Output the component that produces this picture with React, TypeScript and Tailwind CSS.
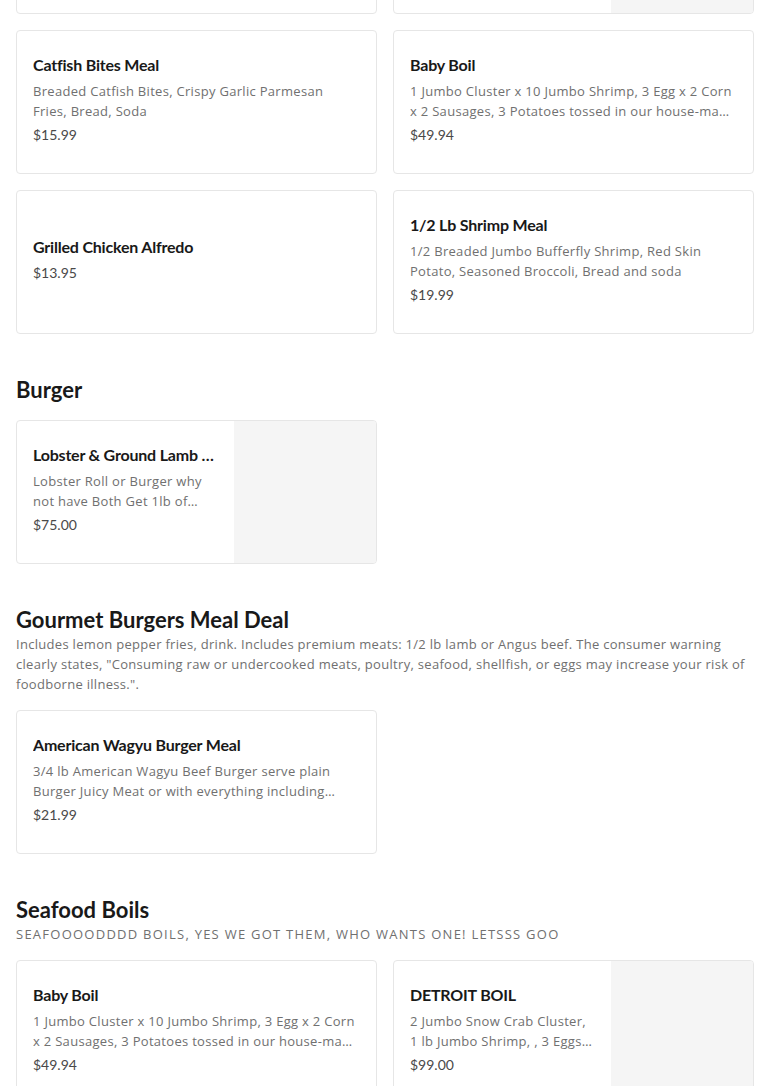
type Item = {
  name: string;
  desc?: string;
  price: string;
  image?: boolean;
};

type Section = {
  title?: string;
  desc?: string;
  items: Item[];
};

const sections: Section[] = [
  {
    items: [
      {
        name: "Fried Catfish Meal",
        desc: "Two Catfish Fillets, Fries, Bread, Soda",
        price: "$17.99",
      },
      {
        name: "Snow Crab Meal",
        desc: "1 Snow Crab Cluster, Corn, Potatoes, Egg",
        price: "$29.99",
        image: true,
      },
      {
        name: "Catfish Bites Meal",
        desc: "Breaded Catfish Bites, Crispy Garlic Parmesan Fries, Bread, Soda",
        price: "$15.99",
      },
      {
        name: "Baby Boil",
        desc: "1 Jumbo Cluster x 10 Jumbo Shrimp, 3 Egg x 2 Corn x 2 Sausages, 3 Potatoes tossed in our house-made seafood sauce",
        price: "$49.94",
      },
      { name: "Grilled Chicken Alfredo", price: "$13.95" },
      {
        name: "1/2 Lb Shrimp Meal",
        desc: "1/2 Breaded Jumbo Bufferfly Shrimp, Red Skin Potato, Seasoned Broccoli, Bread and soda",
        price: "$19.99",
      },
    ],
  },
  {
    title: "Burger",
    items: [
      {
        name: "Lobster & Ground Lamb Burger",
        desc: "Lobster Roll or Burger why not have Both Get 1lb of Lobster and ground lamb",
        price: "$75.00",
        image: true,
      },
    ],
  },
  {
    title: "Gourmet Burgers Meal Deal",
    desc: 'Includes lemon pepper fries, drink. Includes premium meats: 1/2 lb lamb or Angus beef. The consumer warning clearly states, "Consuming raw or undercooked meats, poultry, seafood, shellfish, or eggs may increase your risk of foodborne illness.".',
    items: [
      {
        name: "American Wagyu Burger Meal",
        desc: "3/4 lb American Wagyu Beef Burger serve plain Burger Juicy Meat or with everything including lettuce, tomato, onion",
        price: "$21.99",
      },
    ],
  },
  {
    title: "Seafood Boils",
    desc: "SEAFOOOODDDD BOILS, YES WE GOT THEM, WHO WANTS ONE! LETSSS GOO",
    items: [
      {
        name: "Baby Boil",
        desc: "1 Jumbo Cluster x 10 Jumbo Shrimp, 3 Egg x 2 Corn x 2 Sausages, 3 Potatoes tossed in our house-made seafood sauce",
        price: "$49.94",
      },
      {
        name: "DETROIT BOIL",
        desc: "2 Jumbo Snow Crab Cluster, 1 lb Jumbo Shrimp, , 3 Eggs, 3 Corn, 3 Potatoes",
        price: "$99.00",
        image: true,
      },
    ],
  },
];

// descriptions use a slightly spaced-out Open Sans to get the same line breaks
const descText = "font-['Open_Sans',sans-serif] text-[13px] leading-5 text-[#707070]";

function ItemCard({ item }: { item: Item }) {
  return (
    <div className="flex h-36 overflow-hidden rounded border border-[#e6e6e6] bg-white">
      <div className="flex min-w-0 flex-1 flex-col justify-center gap-1 pb-1.5 pl-4 pr-[18px]">
        <div className="truncate text-[16px] font-bold leading-6 tracking-[-0.2px] text-[#191919]">
          {item.name}
        </div>
        {item.desc && <p className={`line-clamp-2 tracking-[0.3px] ${descText}`}>{item.desc}</p>}
        <div className="text-[14px] leading-5 text-[#494949]">{item.price}</div>
      </div>
      {item.image && <div className="w-[142px] shrink-0 bg-[#f5f5f5]" />}
    </div>
  );
}

export default function App() {
  return (
    <div className="min-h-screen bg-white px-4 pb-10 font-['Lato',sans-serif]">
      <div className="-mt-[130px]">
        {sections.map((s, i) => {
          const caps = s.desc ? s.desc === s.desc.toUpperCase() : false;
          return (
            <section key={i} className={i === 0 ? "" : "pt-[42px]"}>
              {s.title && (
                <h2 className="text-[22px] font-bold leading-7 text-[#191919]">{s.title}</h2>
              )}
              {s.desc && (
                <p className={`${descText} ${caps ? "tracking-[1.25px]" : "tracking-[0.3px]"}`}>
                  {s.desc}
                </p>
              )}
              <div className={`grid grid-cols-2 gap-4 ${s.title ? "mt-4" : ""}`}>
                {s.items.map((item, j) => (
                  <ItemCard key={j} item={item} />
                ))}
              </div>
            </section>
          );
        })}
      </div>
    </div>
  );
}
